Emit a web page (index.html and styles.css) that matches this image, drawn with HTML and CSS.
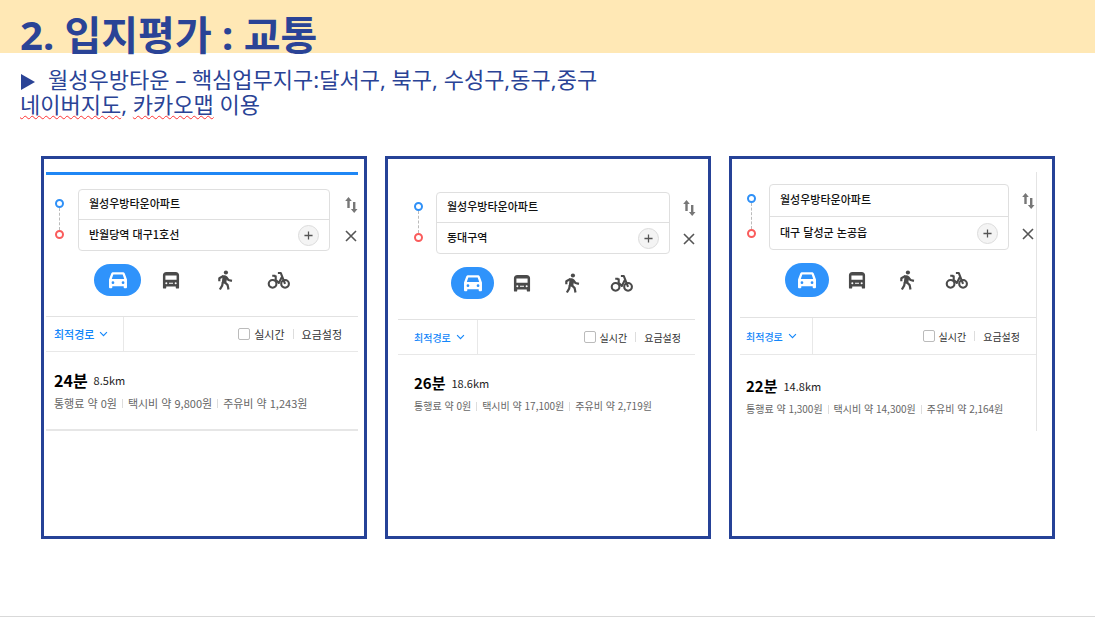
FILE: index.html
```
<!DOCTYPE html>
<html lang="ko">
<head>
  <meta charset="UTF-8">
  <title>입지평가 : 교통</title>
  <link rel="stylesheet" href="styles.css">
</head>
<body>
  <svg class="sprite" aria-hidden="true">
    <symbol id="car" viewBox="0 0 24 24">
      <path fill="currentColor" fill-rule="evenodd" d="M7 3.500h10c1.200 0 2 .5 2.400 1.500L21.800 11.500V20c0 .6-.4 1-1 1h-1.600c-.6 0-1-.4-1-1v-1.200H5.800V20c0 .6-.4 1-1 1H3.200c-.6 0-1-.4-1-1v-8.500L4.600 5C5 4 5.800 3.500 7 3.500zM6.900 5.900L5.200 11h13.600l-1.700-5.100zM6.500 13.400a1.500 1.500 0 1 0 0 3 1.500 1.500 0 0 0 0-3zM17.500 13.400a1.500 1.500 0 1 0 0 3 1.500 1.500 0 0 0 0-3z"/>
    </symbol>
    <symbol id="bus" viewBox="0 0 24 24">
      <path fill="currentColor" fill-rule="evenodd" d="M7 3.200h10c2.400 0 3.800 1.400 3.800 3.600V20.400c0 .6-.4 1-1 1h-1.600c-.6 0-1-.4-1-1v-1.200H6.800v1.200c0 .6-.4 1-1 1H4.200c-.6 0-1-.4-1-1V6.800c0-2.200 1.400-3.600 3.800-3.600zM5.900 7.200v4.600h12.200V7.200zM6.900 14.400a1.100 1.100 0 1 0 0 2.200 1.100 1.100 0 0 0 0-2.200zM9.800 15v1h4.400v-1zM17.100 14.400a1.100 1.100 0 1 0 0 2.200 1.100 1.100 0 0 0 0-2.200z"/>
    </symbol>
    <symbol id="walk" viewBox="0 0 24 24">
      <circle cx="13" cy="3.800" r="2.300" fill="currentColor"/>
      <path fill="none" stroke="currentColor" stroke-width="2.400" stroke-linejoin="round" d="M5.800 13.400V10l4.400-2.300M13.200 8.800l2.600 3.200 3.800.9M9.600 14.500l-.7 3.700-2.500 4.200M11.300 14l3.600 3.600.9 4.800"/>
      <path fill="currentColor" d="M9.400 7.200c1.500-.7 3.500-.5 4.600.6l.5 1.600-1.200 5.600-1.200 1-3.600-.8z"/>
    </symbol>
    <symbol id="bike" viewBox="0 0 26 24">
      <g fill="none" stroke="currentColor" stroke-width="2.300">
        <circle cx="6" cy="16.200" r="4.200"/>
        <circle cx="19.600" cy="16.200" r="4.200"/>
        <path stroke-linejoin="round" d="M7.600 7.600l1.800.4v3.600l3.400 3.600L16 9M5.600 7.400h3.400M11.800 4.400h3.200l4.600 11.800"/>
      </g>
    </symbol>
    <symbol id="swap" viewBox="0 0 14 18">
      <path fill="currentColor" d="M4.500 1l3.300 4H5.700v7H3.300V5H1.200zM10.200 17l-3.300-4H9V6h2.400v7h2.100z"/>
    </symbol>
    <symbol id="close" viewBox="0 0 14 14">
      <path fill="none" stroke="currentColor" stroke-width="1.600" d="M2 2l10 10M12 2L2 12"/>
    </symbol>
    <symbol id="plus" viewBox="0 0 10 10">
      <path fill="none" stroke="currentColor" stroke-width="1.400" d="M5 .5v9M.5 5h9"/>
    </symbol>
    <symbol id="chevron" viewBox="0 0 10 6">
      <path fill="none" stroke="currentColor" stroke-width="1.300" d="M1.200 1L5 4.800 8.800 1"/>
    </symbol>
  </svg>

  <div class="slide">
    <header class="band">
      <h1>2. 입지평가 : 교통</h1>
    </header>

    <div class="intro">
      <p><svg class="bullet" viewBox="0 0 16 18" aria-hidden="true"><path fill="currentColor" d="M1 1l14 8-14 8z"/></svg>월성우방타운 – 핵심업무지구:달서구, 북구, 수성구,동구,중구</p>
      <p><span class="typo">네이버지도</span>, <span class="typo">카카오맵</span> 이용</p>
    </div>

    <main class="cards">
      <section class="card">
        <div class="route route-banwoldang">
          <div class="form">
            <div class="pins"><i class="pin"></i><i class="dots"></i><i class="pin end"></i></div>
            <div class="fields">
              <input type="text" aria-label="출발지" value="월성우방타운아파트">
              <div class="dest">
                <input type="text" aria-label="도착지" value="반월당역 대구1호선">
                <button class="add" aria-label="경유지 추가"><svg><use href="#plus"/></svg></button>
              </div>
            </div>
            <div class="tools">
              <button aria-label="출발지 도착지 전환"><svg class="swap"><use href="#swap"/></svg></button>
              <button aria-label="닫기"><svg class="close"><use href="#close"/></svg></button>
            </div>
          </div>
          <nav class="modes">
            <button class="active" aria-label="자동차"><svg><use href="#car"/></svg></button>
            <button aria-label="대중교통"><svg><use href="#bus"/></svg></button>
            <button aria-label="도보"><svg><use href="#walk"/></svg></button>
            <button aria-label="자전거"><svg class="bike"><use href="#bike"/></svg></button>
          </nav>
          <div class="bar">
            <button class="sort">최적경로 <svg><use href="#chevron"/></svg></button>
            <div class="options">
              <label><input type="checkbox"> 실시간</label>
              <button>요금설정</button>
            </div>
          </div>
          <div class="result">
            <p class="time"><strong>24분</strong> 8.5km</p>
            <ul class="costs">
              <li>통행료 약 0원</li>
              <li>택시비 약 9,800원</li>
              <li>주유비 약 1,243원</li>
            </ul>
          </div>
        </div>
      </section>

      <section class="card">
        <div class="route route-dongdaegu">
          <div class="form">
            <div class="pins"><i class="pin"></i><i class="dots"></i><i class="pin end"></i></div>
            <div class="fields">
              <input type="text" aria-label="출발지" value="월성우방타운아파트">
              <div class="dest">
                <input type="text" aria-label="도착지" value="동대구역">
                <button class="add" aria-label="경유지 추가"><svg><use href="#plus"/></svg></button>
              </div>
            </div>
            <div class="tools">
              <button aria-label="출발지 도착지 전환"><svg class="swap"><use href="#swap"/></svg></button>
              <button aria-label="닫기"><svg class="close"><use href="#close"/></svg></button>
            </div>
          </div>
          <nav class="modes">
            <button class="active" aria-label="자동차"><svg><use href="#car"/></svg></button>
            <button aria-label="대중교통"><svg><use href="#bus"/></svg></button>
            <button aria-label="도보"><svg><use href="#walk"/></svg></button>
            <button aria-label="자전거"><svg class="bike"><use href="#bike"/></svg></button>
          </nav>
          <div class="bar">
            <button class="sort">최적경로 <svg><use href="#chevron"/></svg></button>
            <div class="options">
              <label><input type="checkbox"> 실시간</label>
              <button>요금설정</button>
            </div>
          </div>
          <div class="result">
            <p class="time"><strong>26분</strong> 18.6km</p>
            <ul class="costs">
              <li>통행료 약 0원</li>
              <li>택시비 약 17,100원</li>
              <li>주유비 약 2,719원</li>
            </ul>
          </div>
        </div>
      </section>

      <section class="card">
        <div class="route route-nongong">
          <div class="form">
            <div class="pins"><i class="pin"></i><i class="dots"></i><i class="pin end"></i></div>
            <div class="fields">
              <input type="text" aria-label="출발지" value="월성우방타운아파트">
              <div class="dest">
                <input type="text" aria-label="도착지" value="대구 달성군 논공읍">
                <button class="add" aria-label="경유지 추가"><svg><use href="#plus"/></svg></button>
              </div>
            </div>
            <div class="tools">
              <button aria-label="출발지 도착지 전환"><svg class="swap"><use href="#swap"/></svg></button>
              <button aria-label="닫기"><svg class="close"><use href="#close"/></svg></button>
            </div>
          </div>
          <nav class="modes">
            <button class="active" aria-label="자동차"><svg><use href="#car"/></svg></button>
            <button aria-label="대중교통"><svg><use href="#bus"/></svg></button>
            <button aria-label="도보"><svg><use href="#walk"/></svg></button>
            <button aria-label="자전거"><svg class="bike"><use href="#bike"/></svg></button>
          </nav>
          <div class="bar">
            <button class="sort">최적경로 <svg><use href="#chevron"/></svg></button>
            <div class="options">
              <label><input type="checkbox"> 실시간</label>
              <button>요금설정</button>
            </div>
          </div>
          <div class="result">
            <p class="time"><strong>22분</strong> 14.8km</p>
            <ul class="costs">
              <li>통행료 약 1,300원</li>
              <li>택시비 약 14,300원</li>
              <li>주유비 약 2,164원</li>
            </ul>
          </div>
        </div>
      </section>
    </main>
  </div>
</body>
</html>
```

FILE: styles.css
```
* {
  box-sizing: border-box;
}
body {
  margin: 0;
  background: #fff;
  color: #222;
  font-family: "Noto Sans CJK KR", "Noto Sans", sans-serif;
}
h1, p, ul {
  margin: 0;
  padding: 0;
}
button {
  padding: 0;
  border: none;
  background: none;
  color: inherit;
  font: inherit;
  cursor: pointer;
}
svg {
  display: block;
}
.sprite {
  position: absolute;
  width: 0;
  height: 0;
}

.slide {
  display: flex;
  flex-direction: column;
  min-height: 100vh;
  padding-bottom: 77px;
  border-bottom: 1px solid #d9d9d9;
}
.band {
  height: 53px;
  padding: 15px 20px 0;
  background: #ffe8b5;
}
h1, .intro {
  color: #2a4396;
  font-family: "Noto Sans", "Noto Sans CJK KR", sans-serif;
}
h1 {
  font-size: 40px;
  line-height: 40px;
}
.intro {
  padding: 14px 20px 39px;
  font-size: 22px;
  line-height: 25px;
}
.bullet {
  display: inline-block;
  width: 16px;
  height: 18px;
  margin-right: 12px;
  vertical-align: -3px;
}
.typo {
  text-decoration: underline wavy #f33 1px;
  text-underline-offset: 2px;
}

.cards {
  flex: 1;
  display: grid;
  grid-template-columns: repeat(3, 1fr);
  gap: 18px;
  padding: 0 40px 0 41px;
}
.card {
  border: 3px solid #264297;
}

/* each route panel sets its own insets */
.route {
  font-size: var(--text);
}
.route-banwoldang {
  --text: 11px;
  --time: 16px;
  --row: 30px;
  --pins: 32px;
  --pin-inset: 9px;
  --tools: 28px;
  --inset: 8px;
  --modes: 48px;
  --pill: 47px;
  --pill-height: 32px;
  --step: 54px;
  --tab: 78px;
  --bar: 36px;
  --end: 16px;
  margin: 13px 6px 0 2px;
  padding: 14px 0 18px;
  border-top: 3px solid #1f87f5;
  border-bottom: 2px solid #e6e6e6;
}
.route-dongdaegu {
  --text: 10px;
  --time: 15px;
  --row: 30px;
  --pins: 38px;
  --pin-inset: 16px;
  --tools: 25px;
  --inset: 16px;
  --modes: 53px;
  --pill: 43px;
  --pill-height: 32px;
  --step: 50px;
  --tab: 80px;
  --bar: 36px;
  --end: 14px;
  margin: 13px 13px 0 10px;
  padding: 20px 0 18px;
}
.route-nongong {
  --text: 10px;
  --time: 15px;
  --row: 32px;
  --pins: 29px;
  --pin-inset: 7px;
  --tools: 27px;
  --inset: 6px;
  --modes: 45px;
  --pill: 44px;
  --pill-height: 34px;
  --step: 50px;
  --tab: 73px;
  --bar: 38px;
  --end: 16px;
  margin: 13px 15px 0 8px;
  padding: 12px 0 14px;
  border-right: 1px solid #e4e4e4;
}

.form {
  display: grid;
  grid-template-columns: var(--pins) 1fr var(--tools);
}
.pins {
  display: flex;
  flex-direction: column;
  align-items: center;
  width: 9px;
  margin-left: var(--pin-inset);
  padding: 10px 0 12px;
}
.pin {
  width: 9px;
  height: 9px;
  border: 2px solid #2f90f7;
  border-radius: 50%;
}
.pin.end {
  border-color: #fa5c5c;
}
.dots {
  flex: 1;
  border-left: 1px dashed #bbb;
}
.fields {
  border: 1px solid #dfdfdf;
  border-radius: 4px;
}
.fields input {
  display: block;
  width: 100%;
  height: var(--row);
  padding: 0 10px 3px;
  border: none;
  background: none;
  color: #111;
  font: 500 11px "Noto Sans CJK KR", sans-serif;
}
.fields > input {
  border-bottom: 1px solid #dfdfdf;
}
.dest {
  display: flex;
  align-items: center;
  padding-right: 10px;
}
.dest input {
  flex: 1;
  min-width: 0;
}
.add {
  display: grid;
  place-items: center;
  width: 21px;
  height: 21px;
  border: 1px solid #dcdcdc;
  border-radius: 50%;
  background: #f4f4f4;
  color: #555;
}
.add svg {
  width: 9px;
  height: 9px;
}
.tools {
  display: grid;
  grid-template-rows: 1fr 1fr;
  align-items: center;
  padding-left: 12px;
  color: #555;
}
.route-banwoldang .tools {
  padding-left: 14px;
}
.swap {
  width: 14px;
  height: 18px;
  color: #777;
}
.close {
  width: 14px;
  height: 14px;
}

.modes {
  display: flex;
  padding: 13px 0 20px var(--modes);
  color: #4a4a4a;
}
.modes button {
  display: grid;
  place-items: center;
  width: var(--step);
  height: var(--pill-height);
}
.modes .active {
  width: var(--pill);
  margin-right: 3px;
  border-radius: 17px;
  background: #2f93fb;
  color: #fff;
}
.modes svg {
  width: 22px;
  height: 22px;
}
.modes .bike {
  width: 24px;
}

.bar {
  display: flex;
  justify-content: space-between;
  height: var(--bar);
  border-top: 1px solid #e2e2e2;
  border-bottom: 1px solid #e8e8e8;
}
.sort {
  display: flex;
  align-items: center;
  gap: 5px;
  width: var(--tab);
  padding-left: var(--inset);
  border-right: 1px solid #e8e8e8;
  color: #1487fa;
  font-weight: 500;
}
.sort svg {
  width: 9px;
  height: 6px;
}
.options {
  display: flex;
  align-items: center;
  padding-right: var(--end);
  color: #333;
}
.options label {
  display: flex;
  align-items: center;
  gap: 4px;
}
.options input {
  appearance: none;
  width: 12px;
  height: 12px;
  margin: 0;
  border: 1px solid #bbb;
  border-radius: 2px;
}
.options button {
  display: flex;
  align-items: center;
}
.options button::before {
  content: "";
  width: 1px;
  height: 10px;
  margin: 0 8px;
  background: #ddd;
}

.result {
  padding: 18px 0 0 var(--inset);
}
.route-nongong .result {
  padding-top: 21px;
}
.time {
  display: flex;
  align-items: center;
  gap: 6px;
  font-size: 11px;
  line-height: 20px;
}
.time strong {
  color: #000;
  font-size: var(--time);
}
.costs {
  display: flex;
  margin-top: 5px;
  color: #666;
  line-height: 16px;
  list-style: none;
  white-space: nowrap;
}
.costs li {
  display: flex;
  align-items: center;
}
.costs li + li::before {
  content: "";
  width: 1px;
  height: 9px;
  margin: 0 5px;
  background: #ddd;
}
```
